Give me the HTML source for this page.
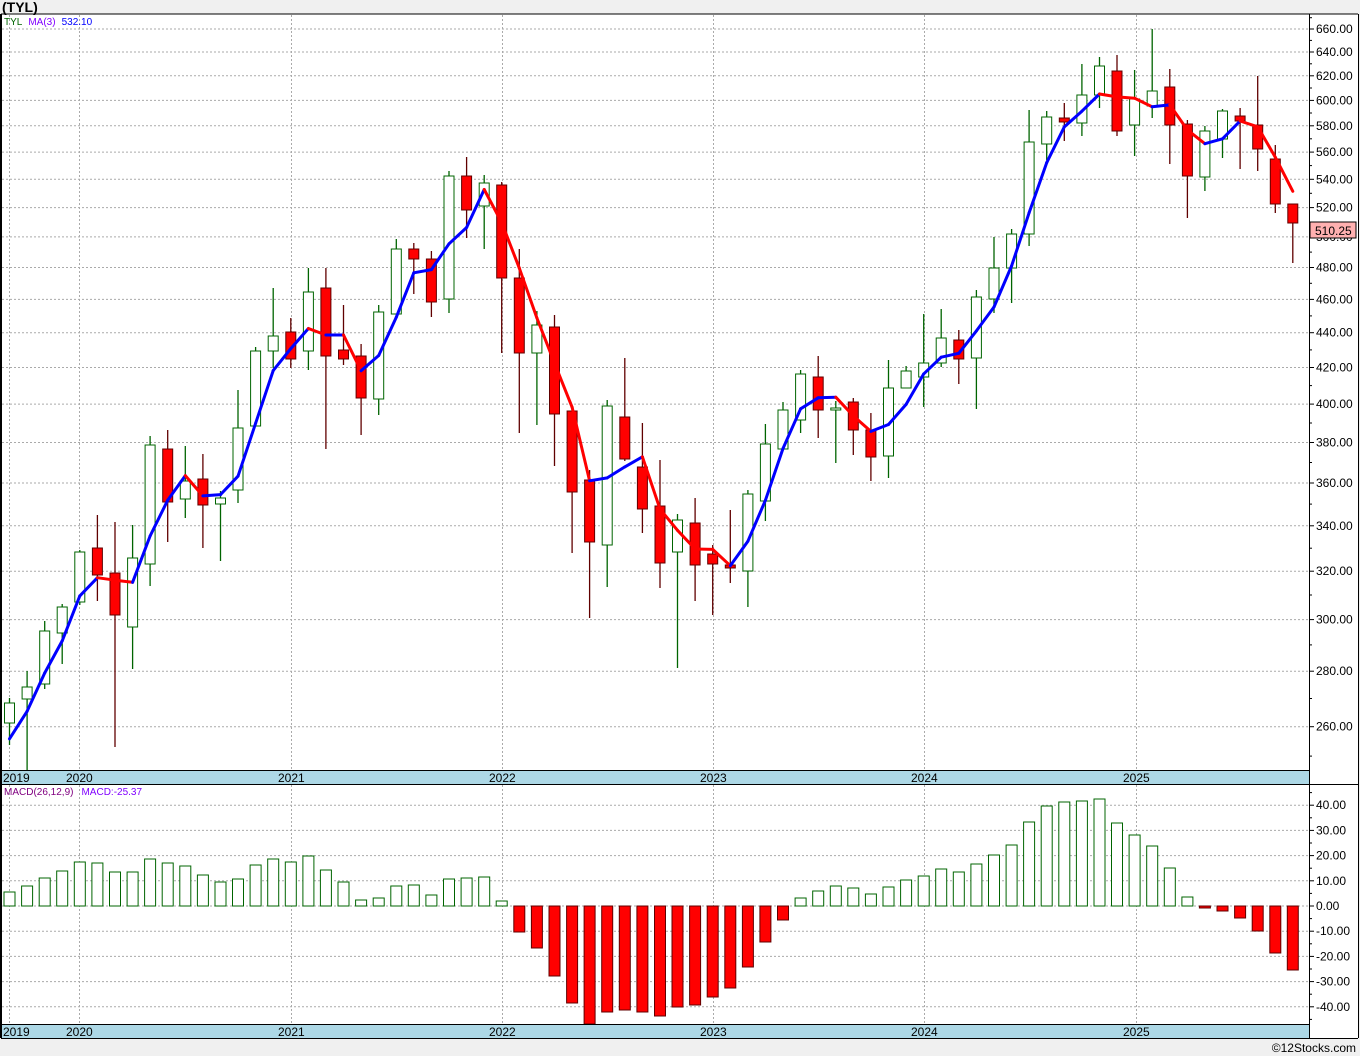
<!DOCTYPE html>
<html><head><meta charset="utf-8"><style>
html,body{margin:0;padding:0;background:#f0f0f0;}
svg{display:block;font-family:"Liberation Sans",sans-serif;}
</style></head><body>
<svg id="s" width="1360" height="1056" xmlns="http://www.w3.org/2000/svg">
<rect x="0" y="0" width="1360" height="1056" fill="#f0f0f0"/>
<rect x="1" y="14" width="1357" height="1024" fill="#fff"/>
<text x="2" y="12" font-size="14" font-weight="bold">(TYL)</text>
<rect x="1" y="770" width="1308" height="14" fill="#add8e6"/>
<rect x="1" y="1024" width="1308" height="14" fill="#add8e6"/>
<g id="g"></g>
<line x1="1" y1="14" x2="1358" y2="14" stroke="#000"/>
<line x1="1" y1="14" x2="1" y2="1038" stroke="#000" stroke-width="2"/>
<line x1="1309.5" y1="14" x2="1309.5" y2="1038" stroke="#000"/>
<line x1="1358.5" y1="14" x2="1358.5" y2="1038" stroke="#000"/>
<line x1="1" y1="770.5" x2="1309" y2="770.5" stroke="#000"/>
<line x1="1" y1="784.5" x2="1358" y2="784.5" stroke="#000"/>
<line x1="1" y1="1024.5" x2="1309" y2="1024.5" stroke="#000"/>
<line x1="1" y1="1038.5" x2="1358" y2="1038.5" stroke="#000"/>
<text x="4" y="25" font-size="10"><tspan fill="#006400">TYL</tspan><tspan fill="#8000ff" dx="6">MA(3)</tspan><tspan fill="#0000ff" dx="6">532.10</tspan></text>
<text x="4" y="795" font-size="10"><tspan fill="#800080">MACD(26,12,9)</tspan><tspan fill="#8000ff" dx="8">MACD:-25.37</tspan></text>
<text x="1356" y="1052" font-size="12" text-anchor="end" fill="#000">©12Stocks.com</text>
<rect x="1310" y="222" width="46" height="16" fill="#ffb0b0" stroke="#000"/>
<text x="1315" y="235" font-size="12">510.25</text>
</svg>
<script>
var g=document.getElementById('g'),out="";
function Y(p){return 29+749*Math.log(660/p);}
function P(y){return 660*Math.exp(-(y-29)/749);}
for(var p=260;p<=660;p+=20){var y=Y(p).toFixed(1);
out+='<line x1="2" y1="'+y+'" x2="1309" y2="'+y+'" stroke="#aaa" stroke-dasharray="2,2"/>';
out+='<line x1="1309" y1="'+y+'" x2="1314" y2="'+y+'" stroke="#000"/>';
out+='<text x="1316" y="'+(+y+4)+'" font-size="12">'+p+'.00</text>';
var y2=Y(p+10).toFixed(1);out+='<line x1="1309" y1="'+y2+'" x2="1312" y2="'+y2+'" stroke="#000"/>';}
out+='<line x1="1309" y1="'+Y(250).toFixed(1)+'" x2="1312" y2="'+Y(250).toFixed(1)+'" stroke="#000"/>';
for(var v=-40;v<=40;v+=10){var y=(906-v*2.52).toFixed(1);
out+='<line x1="2" y1="'+y+'" x2="1309" y2="'+y+'" stroke="#aaa" stroke-dasharray="2,2"/>';
out+='<line x1="1309" y1="'+y+'" x2="1314" y2="'+y+'" stroke="#000"/>';
out+='<text x="1316" y="'+(+y+4)+'" font-size="12">'+(v<0?'':' ')+v.toFixed(2)+'</text>';
var y2=(906-(v+5)*2.52).toFixed(1);out+='<line x1="1309" y1="'+y2+'" x2="1312" y2="'+y2+'" stroke="#000"/>';}
var y2=(906+45*2.52).toFixed(1);out+='<line x1="1309" y1="'+y2+'" x2="1312" y2="'+y2+'" stroke="#000"/>';
var yrs=[[9,'2019'],[79,'2020'],[291,'2021'],[502,'2022'],[713,'2023'],[924,'2024'],[1136,'2025']];
yrs.forEach(function(a){
out+='<line x1="'+a[0]+'.5" y1="15" x2="'+a[0]+'.5" y2="770" stroke="#aaa" stroke-dasharray="2,2"/>';
out+='<line x1="'+a[0]+'.5" y1="785" x2="'+a[0]+'.5" y2="1024" stroke="#aaa" stroke-dasharray="2,2"/>';
var tx=a[0]==9?3:a[0]-13;
out+='<text x="'+tx+'" y="782" font-size="12">'+a[1]+'</text>';
out+='<text x="'+tx+'" y="1036" font-size="12">'+a[1]+'</text>';});
var C=[[698,703,723,745,1],[671,687,699,770,1],[621,631,684,689,1],[604,607,633,664,1],[550,552,602,605,1],
[515,548,575,601,0],[522,573,615,747,0],[525,558,627,669,1],[436,445,564,586,1],[430,449,502,542,0],
[446,481,499,518,1],[454,479,505,548,0],[491,498,504,561,1],[390,428,490,503,1],[347,351,426,426,1],
[288,336,351,368,1],[318,332,359,368,0],[268,292,351,370,1],[268,288,356,449,0],[305,350,359,365,0],
[344,356,398,435,0],[305,312,399,415,1],[239,249,314,314,1],[243,249,259,294,0],[251,259,302,317,0],
[171,176,299,313,1],[157,176,210,238,0],[175,183,206,249,1],[182,185,278,353,0],[249,278,353,433,0],
[311,325,353,425,1],[315,327,414,466,0],[411,411,492,553,0],[470,480,542,618,0],[400,406,545,587,1],
[358,417,459,461,0],[423,467,509,533,0],[460,506,563,588,0],[514,520,552,668,1],[498,523,565,601,0],
[545,554,564,615,0],[510,565,568,583,0],[490,494,571,607,1],[424,444,501,521,1],[402,410,449,449,1],
[370,374,420,433,1],[356,377,410,438,0],[401,408,410,463,1],[398,402,430,455,0],[413,430,457,481,0],
[360,388,456,478,1],[366,371,388,388,1],[314,363,377,407,1],[309,338,363,367,1],[330,340,359,384,0],
[290,297,358,409,1],[237,268,299,313,1],[229,234,268,303,1],[110,142,234,246,1],[111,117,144,160,1],
[103,118,122,141,0],[64,95,123,136,1],[57,66,95,108,1],[55,71,131,136,0],[70,99,125,156,1],
[29,91,106,118,1],[69,87,125,164,0],[120,124,176,218,0],[126,131,177,191,1],[109,111,139,158,1],
[108,116,121,169,0],[76,125,149,171,0],[145,159,204,213,0],[204,204,223,263,0]];
var M=[892,886,878,871,862,863,872,872,859,863,866,875,882,879,865,859,862,856,870,882,900,898,886,885,895,879,878,877,901,932,948,976,1003,1024,1012,1010,1012,1016,1007,1005,997,988,967,942,920,898,891,886,888,894,887,880,876,869,872,864,855,845,822,806,802,801,799,823,835,846,868,897,908,911,918,931,953,970];
function X(i){return 9.5+17.58*i;}
var closes=[];
C.forEach(function(c,i){var x=X(i),up=c[4];
var wc=up?'#006400':'#600000';
out+='<line x1="'+x.toFixed(1)+'" y1="'+c[0]+'" x2="'+x.toFixed(1)+'" y2="'+c[3]+'" stroke="'+wc+'" stroke-width="1.3"/>';
var h=Math.max(c[2]-c[1],2);
out+='<rect x="'+(x-5).toFixed(1)+'" y="'+c[1]+'" width="10" height="'+h+'" fill="'+(up?'#fff':'#f00')+'" stroke="'+(up?'#006400':'#600000')+'" stroke-width="1"/>';
closes.push(P(up?c[1]:c[2]));
var m=M[i];var top=Math.min(m,906),bh=Math.max(Math.abs(m-906),1);
var pos=m<=906;
out+='<rect x="'+(x-5.5).toFixed(1)+'" y="'+top+'" width="11" height="'+bh+'" fill="'+(pos?'#fff':'#f00')+'" stroke="'+(pos?'#006400':'#600000')+'"/>';
});
var pre=[P(770),P(745)];var all=pre.concat(closes);var ma=[];
for(var i=0;i<C.length;i++){ma.push(Y((all[i]+all[i+1]+all[i+2])/3));}
for(var i=1;i<ma.length;i++){var col=ma[i]<=ma[i-1]?'#0000ff':'#ff0000';
out+='<line x1="'+X(i-1).toFixed(1)+'" y1="'+ma[i-1].toFixed(1)+'" x2="'+X(i).toFixed(1)+'" y2="'+ma[i].toFixed(1)+'" stroke="'+col+'" stroke-width="3" stroke-linecap="round"/>';}
g.innerHTML=out;
</script>
</body></html>
